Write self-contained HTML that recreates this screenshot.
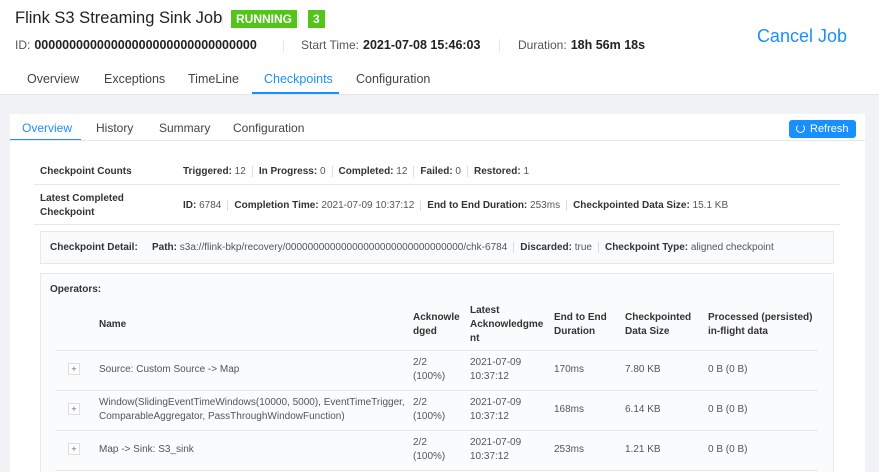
<!DOCTYPE html>
<html><head><meta charset="utf-8"><style>
*{box-sizing:border-box;margin:0;padding:0}
html,body{width:879px;height:472px;overflow:hidden}
body{font-family:"Liberation Sans",sans-serif;background:#f0f2f5;color:#333;position:relative}
.hdr{position:absolute;left:0;top:0;width:879px;height:95px;background:#fff;border-bottom:1px solid #e5e5e5}
.abs{position:absolute;white-space:nowrap}
.title{left:15px;top:9px;font-size:16.5px;color:#222}
.badge{background:#52c41a;color:#fff;font-weight:bold;font-size:12px;height:18px;line-height:18px;padding:0 5px;top:10px}
.sep{width:1px;height:14px;background:#e8e8e8}
.meta{font-size:12px;color:#555;top:38px}
.meta b{color:#222;margin-left:4px;font-size:12.5px}
.cancel{right:32px;top:26px;font-size:18px;color:#1890ff}
.tab{font-size:12.5px;color:#444;top:72px}
.card{position:absolute;left:10px;top:114px;width:855px;height:358px;background:#fff;overflow:hidden}
.st{font-size:12px;color:#444;top:7px}
.s{font-size:10px;color:#555}
.s b{color:#333}
.pipe{display:inline-block;width:1px;height:11px;background:#ddd;margin:0 6px;vertical-align:middle}
.line{position:absolute;height:1px;background:#e8e8e8}
.box{position:absolute;background:#fafbfc;border:1px solid #e8e8e8}
th,td{font-size:10px;text-align:left;vertical-align:middle}
.plus{display:inline-block;width:12px;height:12px;border:1px solid #ddd;background:#fff;font-size:9px;line-height:10px;text-align:center;color:#666}
</style></head><body>
<div class="hdr">
<div class="abs title">Flink S3 Streaming Sink Job</div>
<div class="abs sep" style="left:222px;top:13px"></div>
<div class="abs badge" style="left:231px">RUNNING</div>
<div class="abs sep" style="left:298px;top:13px"></div>
<div class="abs badge" style="left:308px">3</div>
<div class="abs meta" style="left:15px">ID:<b>00000000000000000000000000000000</b></div>
<div class="abs sep" style="left:283px;top:39px"></div>
<div class="abs meta" style="left:301px">Start Time:<b>2021-07-08 15:46:03</b></div>
<div class="abs sep" style="left:499px;top:39px"></div>
<div class="abs meta" style="left:518px">Duration:<b>18h 56m 18s</b></div>
<div class="abs cancel">Cancel Job</div>
<div class="abs tab" style="left:27px">Overview</div>
<div class="abs tab" style="left:104px">Exceptions</div>
<div class="abs tab" style="left:188px">TimeLine</div>
<div class="abs tab" style="left:264px;color:#1890ff">Checkpoints</div>
<div class="abs tab" style="left:356px">Configuration</div>
<div class="abs" style="left:252px;top:92px;width:87px;height:2px;background:#1890ff"></div>
</div>
<div class="card">
<div class="abs st" style="left:12px;color:#1890ff">Overview</div>
<div class="abs st" style="left:86px">History</div>
<div class="abs st" style="left:149px">Summary</div>
<div class="abs st" style="left:223px">Configuration</div>
<div class="abs" style="left:0;top:25px;width:71px;height:2px;background:#1890ff"></div>
<div class="line" style="left:0;top:26px;width:855px"></div>
<div class="abs" style="left:779px;top:6px;width:67px;height:18px;background:#1890ff;border-radius:3px;color:#fff;font-size:11px;line-height:18px;padding-left:7px"><span style="display:inline-block;width:9px;height:9px;border:1.5px solid #fff;border-radius:50%;border-top-color:transparent;vertical-align:-1px;margin-right:5px"></span>Refresh</div>

<div class="abs s" style="left:30px;top:52px"><b>Checkpoint Counts</b></div>
<div class="abs s" style="left:173px;top:52px"><b>Triggered:</b> 12<span class="pipe"></span><b>In Progress:</b> 0<span class="pipe"></span><b>Completed:</b> 12<span class="pipe"></span><b>Failed:</b> 0<span class="pipe"></span><b>Restored:</b> 1</div>
<div class="line" style="left:24px;top:70px;width:806px"></div>
<div class="abs s" style="left:30px;top:78px;line-height:14px"><b>Latest Completed<br>Checkpoint</b></div>
<div class="abs s" style="left:173px;top:86px"><b>ID:</b> 6784<span class="pipe"></span><b>Completion Time:</b> 2021-07-09 10:37:12<span class="pipe"></span><b>End to End Duration:</b> 253ms<span class="pipe"></span><b>Checkpointed Data Size:</b> 15.1 KB</div>
<div class="line" style="left:24px;top:110px;width:806px"></div>
<div class="box" style="left:30px;top:117px;width:794px;height:33px"></div>
<div class="abs s" style="left:40px;top:128px"><b>Checkpoint Detail:</b></div>
<div class="abs s" style="left:142px;top:128px"><b>Path:</b> s3a://flink-bkp/recovery/00000000000000000000000000000000/chk-6784<span class="pipe"></span><b>Discarded:</b> true<span class="pipe"></span><b>Checkpoint Type:</b> aligned checkpoint</div>
<div class="box" style="left:30px;top:159px;width:794px;height:210px"></div>
<div class="abs s" style="left:40px;top:170px"><b>Operators:</b></div>
<table style="position:absolute;left:46px;top:186px;width:762px;border-collapse:collapse;color:#555;line-height:14px">
<tr style="height:50px;border-bottom:1px solid #e5e5e5;color:#333;font-weight:bold"><th style="width:43px"></th><th style="width:314px">Name</th><th style="width:57px">Acknowle<br>dged</th><th style="width:84px">Latest<br>Acknowledgme<br>nt</th><th style="width:71px">End to End<br>Duration</th><th style="width:83px">Checkpointed<br>Data Size</th><th>Processed (persisted)<br>in-flight data</th></tr>
<tr style="height:40px;border-bottom:1px solid #e5e5e5"><td style="padding-left:12px"><span class="plus">+</span></td><td>Source: Custom Source -&gt; Map</td><td>2/2<br>(100%)</td><td>2021-07-09<br>10:37:12</td><td>170ms</td><td>7.80 KB</td><td>0 B (0 B)</td></tr>
<tr style="height:40px;border-bottom:1px solid #e5e5e5"><td style="padding-left:12px"><span class="plus">+</span></td><td>Window(SlidingEventTimeWindows(10000, 5000), EventTimeTrigger,<br>ComparableAggregator, PassThroughWindowFunction)</td><td>2/2<br>(100%)</td><td>2021-07-09<br>10:37:12</td><td>168ms</td><td>6.14 KB</td><td>0 B (0 B)</td></tr>
<tr style="height:40px;border-bottom:1px solid #e5e5e5"><td style="padding-left:12px"><span class="plus">+</span></td><td>Map -&gt; Sink: S3_sink</td><td>2/2<br>(100%)</td><td>2021-07-09<br>10:37:12</td><td>253ms</td><td>1.21 KB</td><td>0 B (0 B)</td></tr>
</table>
</div>
</body></html>
